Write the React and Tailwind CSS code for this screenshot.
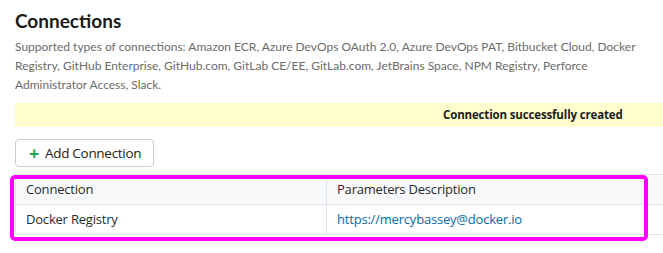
export default function App() {
  return (
    <div className="relative w-[663px] h-[253px] overflow-hidden bg-white font-['Open_Sans',sans-serif]">
      <div className="pl-[15px] pt-[8px]">
        <h1 className="font-['Lato',sans-serif] text-[19px] leading-[26px] font-bold text-[#1b1b1b]">
          Connections
        </h1>

        <p className="mt-[3px] whitespace-nowrap font-['Lato',sans-serif] text-[12px] leading-[19px] text-[#6b6b6b]">
          Supported types of connections: Amazon ECR, Azure DevOps OAuth 2.0, Azure DevOps PAT, Bitbucket Cloud, Docker
          <br />
          Registry, GitHub Enterprise, GitHub.com, GitLab CE/EE, GitLab.com, JetBrains Space, NPM Registry, Perforce
          <br />
          Administrator Access, Slack.
        </p>

        {/* Notice */}
        <div className="mt-[9px] w-[660px] h-[24px] bg-[#fffdcd] flex items-center">
          <span className="ml-[428px] text-[11.5px] font-bold text-[#1c1c1c] tracking-[-0.15px]">
            Connection successfully created
          </span>
        </div>

        <button className="mt-[12px] h-[28px] w-[139px] flex items-center gap-[6px] pl-[13px] rounded-[4px] border border-[#c6cdd6] bg-white text-[13.5px] text-[#222] tracking-[-0.3px]">
          <span className="text-[#1ea75a] text-[18px] leading-none font-bold">+</span>
          Add Connection
        </button>

        <table className="mt-[7px] w-[660px] border-collapse text-[13px] text-[#2b2b2b] tracking-[-0.2px]">
          <thead>
            <tr className="bg-[#f6f8fa]">
              <th className="h-[30px] w-[311px] border border-[#dfe4ea] pl-[10px] text-left font-normal">Connection</th>
              <th className="h-[30px] border border-[#dfe4ea] pl-[10px] text-left font-normal">Parameters Description</th>
            </tr>
          </thead>
          <tbody>
            <tr>
              <td className="h-[30px] border border-[#dfe4ea] pl-[10px]">Docker Registry</td>
              <td className="h-[30px] border border-[#dfe4ea] pl-[10px] text-[#0a6aa6]">https://mercybassey@docker.io</td>
            </tr>
          </tbody>
        </table>
      </div>

      {/* highlight */}
      <div className="absolute left-[10px] top-[175px] w-[638px] h-[66px] rounded-[5px] border-[4px] border-[#ff00ff]" />
    </div>
  );
}
